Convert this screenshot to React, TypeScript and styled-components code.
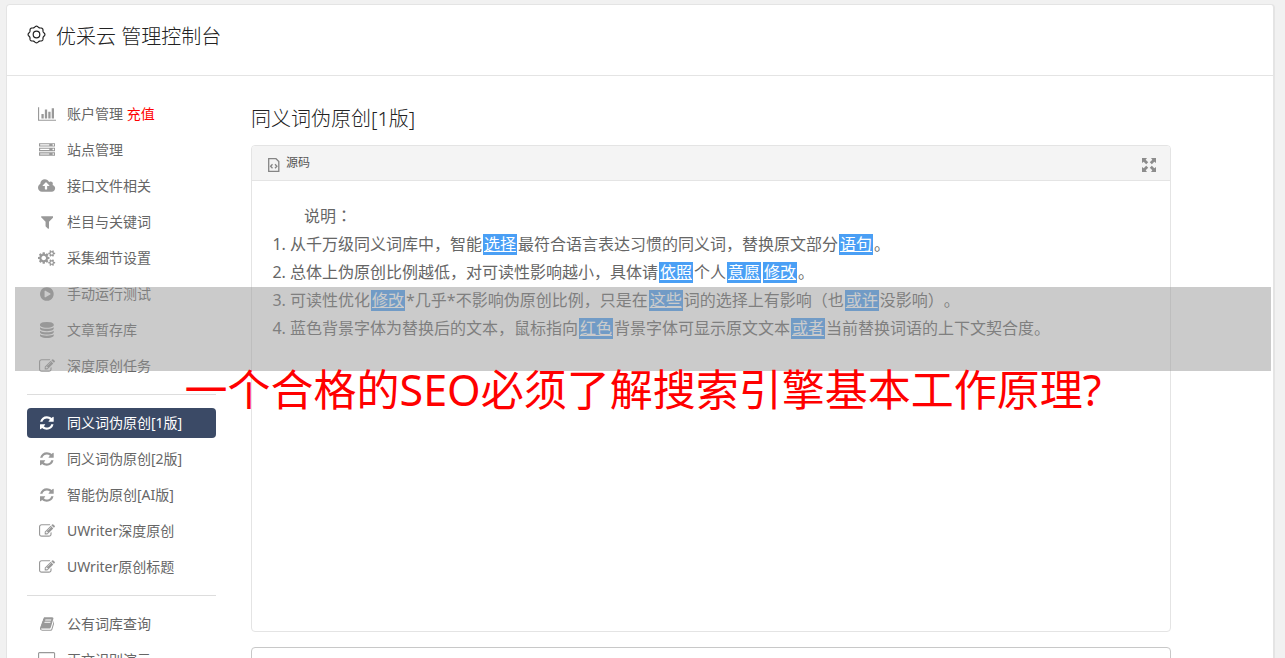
import React from 'react';
import styled, { createGlobalStyle, css } from 'styled-components';

const GlobalStyle = createGlobalStyle`
  *, *::before, *::after { box-sizing: border-box; }
  body {
    margin: 0;
    background: #f1f1f1;
    color: #666;
    font-family: "Noto Sans", "Noto Sans CJK SC", sans-serif;
    font-size: 14px;
    text-spacing-trim: space-all;
  }
  h1, h2, p, ol, ul { margin: 0; padding: 0; font-weight: 400; }
`;

/* ---------- icons ---------- */

type Glyph = { width: number; path: string };

const glyphs = {
  chart: {
    width: 2048,
    path: 'M640 896v512h-256v-512h256zm384-512v1024h-256v-1024h256zm1024 1152v128h-2048v-1536h128v1408h1920zm-640-896v768h-256v-768h256zm384-384v1152h-256v-1152h256z',
  },
  server: {
    width: 1792,
    path: 'M128 1408h1024v-128h-1024v128zm0-512h1024v-128h-1024v128zm1568 448q0-40-28-68t-68-28-68 28-28 68 28 68 68 28 68-28 28-68zm-1568-960h1024v-128h-1024v128zm1568 448q0-40-28-68t-68-28-68 28-28 68 28 68 68 28 68-28 28-68zm0-512q0-40-28-68t-68-28-68 28-28 68 28 68 68 28 68-28 28-68zm96 832v384h-1792v-384h1792zm0-512v384h-1792v-384h1792zm0-512v384h-1792v-384h1792z',
  },
  cloud: {
    width: 1920,
    path: 'M1280 864q0-14-9-23l-352-352q-9-9-23-9t-23 9l-351 351q-10 12-10 24 0 14 9 23t23 9h224v352q0 13 9.5 22.5t22.5 9.5h192q13 0 22.5-9.5t9.5-22.5v-352h224q13 0 22.5-9.5t9.5-22.5zm640 288q0 159-112.5 271.5t-271.5 112.5h-1088q-185 0-316.5-131.5t-131.5-316.5q0-130 70-240t188-165q-2-30-2-43 0-212 150-362t362-150q156 0 285.5 87t188.5 231q71-62 166-62 106 0 181 75t75 181q0 76-41 138 130 31 213.5 135.5t83.5 238.5z',
  },
  filter: {
    width: 1408,
    path: 'M1403 295q17 41-14 70l-493 493v742q0 42-39 59-13 5-25 5-27 0-45-19l-256-256q-19-19-19-45v-486l-493-493q-31-29-14-70 17-39 59-39h1280q42 0 59 39z',
  },
  cogs: {
    width: 1920,
    path: 'M896 896q0-106-75-181t-181-75-181 75-75 181 75 181 181 75 181-75 75-181zm768 512q0-52-38-90t-90-38-90 38-38 90q0 53 37.5 90.5t90.5 37.5 90.5-37.5 37.5-90.5zm0-1024q0-52-38-90t-90-38-90 38-38 90q0 53 37.5 90.5t90.5 37.5 90.5-37.5 37.5-90.5zm-384 421v185q0 10-7 19.5t-16 10.5l-155 24q-11 35-32 76 34 48 90 115 7 10 7 20 0 12-7 19-23 30-82.5 89.5t-78.5 59.5q-11 0-21-7l-115-90q-37 19-77 31-11 108-23 155-7 24-30 24h-186q-11 0-20-7.5t-10-17.5l-23-153q-34-10-75-31l-118 89q-7 7-20 7-11 0-21-8-144-133-144-160 0-9 7-19 10-14 41-53t47-61q-23-44-35-82l-152-24q-10-1-17-9.5t-7-19.5v-185q0-10 7-19.5t16-10.5l155-24q11-35 32-76-34-48-90-115-7-11-7-20 0-12 7-20 22-30 82-89t79-59q11 0 21 7l115 90q34-18 77-32 11-108 23-154 7-24 30-24h186q11 0 20 7.5t10 17.5l23 153q34 10 75 31l118-89q8-7 20-7 11 0 21 8 144 133 144 160 0 9-7 19-12 16-42 54t-45 60q23 48 34 82l152 23q10 2 17 10.5t7 19.5zm640 533v140q0 16-149 31-12 27-30 52 51 113 51 138 0 4-4 7-122 71-124 71-8 0-46-47t-52-68q-20 2-30 2t-30-2q-14 21-52 68t-46 47q-2 0-124-71-4-3-4-7 0-25 51-138-18-25-30-52-149-15-149-31v-140q0-16 149-31 13-29 30-52-51-113-51-138 0-4 4-7 4-2 35-20t59-34 30-16q8 0 46 46.5t52 67.5q20-2 30-2t30 2q51-71 92-112l6-2q4 0 124 70 4 3 4 7 0 25-51 138 17 23 30 52 149 15 149 31zm0-1024v140q0 16-149 31-12 27-30 52 51 113 51 138 0 4-4 7-122 71-124 71-8 0-46-47t-52-68q-20 2-30 2t-30-2q-14 21-52 68t-46 47q-2 0-124-71-4-3-4-7 0-25 51-138-18-25-30-52-149-15-149-31v-140q0-16 149-31 13-29 30-52-51-113-51-138 0-4 4-7 4-2 35-20t59-34 30-16q8 0 46 46.5t52 67.5q20-2 30-2t30 2q51-71 92-112l6-2q4 0 124 70 4 3 4 7 0 25-51 138 17 23 30 52 149 15 149 31z',
  },
  play: {
    width: 1536,
    path: 'M768 128q209 0 385.5 103t279.5 279.5 103 385.5-103 385.5-279.5 279.5-385.5 103-385.5-103-279.5-279.5-103-385.5 103-385.5 279.5-279.5 385.5-103zm384 823q32-18 32-55t-32-55l-544-320q-31-19-64-1-32 19-32 56v640q0 37 32 56 16 8 32 8 17 0 32-9z',
  },
  database: {
    width: 1536,
    path: 'M768 768q237 0 443-43t325-127v170q0 69-103 128t-280 93.5-385 34.5-385-34.5-280-93.5-103-128v-170q119 84 325 127t443 43zm0 768q237 0 443-43t325-127v170q0 69-103 128t-280 93.5-385 34.5-385-34.5-280-93.5-103-128v-170q119 84 325 127t443 43zm0-384q237 0 443-43t325-127v170q0 69-103 128t-280 93.5-385 34.5-385-34.5-280-93.5-103-128v-170q119 84 325 127t443 43zm0-1152q208 0 385 34.5t280 93.5 103 128v128q0 69-103 128t-280 93.5-385 34.5-385-34.5-280-93.5-103-128v-128q0-69 103-128t280-93.5 385-34.5z',
  },
  edit: {
    width: 1792,
    path: 'M888 1184l116-116-152-152-116 116v56h96v96h56zm440-720q-16-16-33 1l-350 350q-17 17-1 33t33-1l350-350q17-17 1-33zm80 594v190q0 119-84.5 203.5t-203.5 84.5h-832q-119 0-203.5-84.5t-84.5-203.5v-832q0-119 84.5-203.5t203.5-84.5h832q63 0 117 25 15 7 18 23 3 17-9 29l-49 49q-14 14-32 8-23-6-45-6h-832q-66 0-113 47t-47 113v832q0 66 47 113t113 47h832q66 0 113-47t47-113v-126q0-13 9-22l64-64q15-15 35-7t20 29zm-96-738l288 288-672 672h-288v-288zm444 132l-92 92-288-288 92-92q28-28 68-28t68 28l152 152q28 28 28 68t-28 68z',
  },
  refresh: {
    width: 1536,
    path: 'M1511 1056q0 5-1 7-64 268-268 434.5t-478 166.5q-146 0-282.5-55t-243.5-157l-129 129q-19 19-45 19t-45-19-19-45v-448q0-26 19-45t45-19h448q26 0 45 19t19 45-19 45l-137 137q71 66 161 102t187 36q134 0 250-65t186-179q11-17 53-117 8-23 30-23h192q13 0 22.5 9.5t9.5 22.5zm25-800v448q0 26-19 45t-45 19h-448q-26 0-45-19t-19-45 19-45l138-138q-148-137-349-137-134 0-250 65t-186 179q-11 17-53 117-8 23-30 23h-199q-13 0-22.5-9.5t-9.5-22.5v-7q65-268 270-434.5t480-166.5q146 0 284 55.5t245 156.5l130-129q19-19 45-19t45 19 19 45z',
  },
  book: {
    width: 1664,
    path: 'M1639 478q40 57 18 129l-275 906q-19 64-76.5 107.5t-122.5 43.5h-923q-77 0-148.5-53.5t-99.5-131.5q-24-67-2-127 0-4 3-27t4-37q1-8-3-21.5t-3-19.5q2-11 8-21t16.5-23.5 16.5-23.5q23-38 45-91.5t30-91.5q3-10 .5-30t-.5-28q3-11 17-28t17-23q21-36 42-92t25-90q1-9-2.5-32t.5-28q4-13 22-30.5t22-22.5q19-26 42.5-84.5t27.5-96.5q1-8-3-25.5t-2-26.5q2-8 9-18t18-23 17-21q8-12 16.5-30.5t15-35 16-36 19.5-32 26.5-23.5 36-11.5 47.5 5.5l-1 3q38-9 51-9h761q74 0 114 56t18 130l-274 906q-36 119-71.5 153.5t-128.5 34.5h-869q-27 0-38 15-11 16-1 43 24 70 144 70h923q29 0 56-15.5t35-41.5l300-987q7-22 5-57 38 15 59 43zm-1064 2q-4 13 2 22.5t20 9.5h608q13 0 25.5-9.5t16.5-22.5l21-64q4-13-2-22.5t-20-9.5h-608q-13 0-25.5 9.5t-16.5 22.5zm-83 256q-4 13 2 22.5t20 9.5h608q13 0 25.5-9.5t16.5-22.5l21-64q4-13-2-22.5t-20-9.5h-608q-13 0-25.5 9.5t-16.5 22.5z',
  },
  desktop: {
    width: 1920,
    path: 'M1792 992v-832q0-13-9.5-22.5t-22.5-9.5h-1600q-13 0-22.5 9.5t-9.5 22.5v832q0 13 9.5 22.5t22.5 9.5h1600q13 0 22.5-9.5t9.5-22.5zm128-832v1088q0 66-47 113t-113 47h-544q0 37 16 77.5t32 71 16 43.5q0 26-19 45t-45 19h-512q-26 0-45-19t-19-45q0-14 16-44t32-70 16-78h-544q-66 0-113-47t-47-113v-1088q0-66 47-113t113-47h1600q66 0 113 47t47 113z',
  },
} satisfies Record<string, Glyph>;

type IconName = keyof typeof glyphs;

const Icon = ({ name }: { name: IconName }) => (
  <svg
    width={(glyphs[name].width * 16) / 1792}
    height="16"
    viewBox={`0 0 ${glyphs[name].width} 1792`}
    fill="currentColor"
    aria-hidden="true"
  >
    <path d={glyphs[name].path} />
  </svg>
);

/* Scalloped outline of the header gear: a circle whose radius swells eight times. */
const gearOutline =
  Array.from({ length: 96 }, (_, i) => {
    const a = (i / 96) * Math.PI * 2;
    const r = 7.8 + 0.6 * Math.cos(a * 8);
    return `${i ? 'L' : 'M'}${(9.5 + r * Math.sin(a)).toFixed(2)} ${(9.5 - r * Math.cos(a)).toFixed(2)}`;
  }).join('') + 'Z';

const GearIcon = () => (
  <svg width="19" height="19" viewBox="0 0 19 19" fill="none" stroke="currentColor" aria-hidden="true">
    <path d={gearOutline} strokeWidth="1.2" />
    <circle cx="9.5" cy="9.5" r="3.3" strokeWidth="1.2" />
  </svg>
);

const SourceIcon = () => (
  <svg width="12" height="14" viewBox="0 0 12 14" fill="none" stroke="#858585" aria-hidden="true">
    <path d="M.7 .7H8L10.8 3.5V13.3H.7Z" strokeWidth="1.3" />
    <path d="M4.5 6.2L2.6 8.2L4.5 10.2M7 6.2L8.9 8.2L7 10.2" strokeWidth="1.3" />
  </svg>
);

const ExpandIcon = () => (
  <svg width="14" height="14" viewBox="0 0 14 14" fill="#8c8c8c" aria-hidden="true">
    {[0, 90, 180, 270].map((turn) => (
      <path key={turn} transform={`rotate(${turn} 7 7)`} d="M0 0H5L3.7 1.7L6.2 4.2L4.2 6.2L1.7 3.7L0 5Z" />
    ))}
  </svg>
);

/* ---------- layout ---------- */

const Page = styled.div`
  position: relative;
  height: 100vh;
  overflow: hidden;
  padding: 4px 10px 0 6px;
`;

const Sheet = styled.div`
  min-height: 100%;
  background: #fff;
  border: 1px solid #e4e4e4;
  border-right-width: 2px;
  border-radius: 4px;
`;

const TopBar = styled.header`
  display: flex;
  align-items: flex-start;
  gap: 10px;
  height: 71px;
  padding: 20px;
  border-bottom: 1px solid #e4e4e4;
  color: #222;
`;

const TopTitle = styled.h1`
  font-size: 20px;
  font-weight: 300;
  line-height: 24px;
`;

const Columns = styled.div`
  display: flex;
  gap: 35px;
  padding: 23px 20px 0;
`;

const Sidebar = styled.nav`
  flex: 0 0 189px;
`;

const MenuGroup = styled.ul`
  display: flex;
  flex-direction: column;
  gap: 6px;
  list-style: none;

  & + & {
    margin-top: 13px;
    padding-top: 13px;
    border-top: 1px solid #ddd;
  }
`;

const MenuLink = styled.a<{ $active?: boolean }>`
  display: flex;
  align-items: center;
  height: 30px;
  border-radius: 4px;
  color: #666;
  text-decoration: none;
  white-space: pre;

  ${({ $active }) =>
    $active &&
    css`
      background: #3b4a66;
      color: #fff;
    `}
`;

const MenuIcon = styled.span<{ $active?: boolean }>`
  display: flex;
  justify-content: center;
  width: 40px;
  color: ${({ $active }) => ($active ? '#fff' : '#999')};
`;

const MenuLabel = styled.span`
  padding-bottom: 2px;
`;

const Recharge = styled.span`
  color: #f00;
`;

const Main = styled.main`
  flex: 0 1 920px;
  min-width: 0;
`;

const Title = styled.h2`
  padding: 6px 0 12px;
  color: #222;
  font-size: 20px;
  font-weight: 300;
  line-height: 28px;
`;

const Editor = styled.section`
  border: 1px solid #e4e4e4;
  border-radius: 4px;
`;

const EditorBar = styled.div`
  display: flex;
  align-items: center;
  justify-content: space-between;
  height: 35px;
  padding: 0 14px 0 16px;
  border-bottom: 1px solid #e4e4e4;
  border-radius: 3px 3px 0 0;
  background: #f4f4f4;
`;

const ToolButton = styled.button`
  display: flex;
  align-items: center;
  gap: 6px;
  padding: 0;
  border: 0;
  background: none;
  color: #555;
  font-family: inherit;
  font-size: 12px;
  line-height: 20px;

  svg { margin-top: 3px; }
`;

const EditorBody = styled.div`
  min-height: 450px;
  padding: 20px;
  font-size: 16px;
  line-height: 28px;
`;

const Intro = styled.p`
  text-indent: 32px;
`;

/* The Traditional face centres full-width punctuation in its cell. */
const Centred = styled.span`
  font-family: "Noto Sans CJK TC", sans-serif;
`;

const Notes = styled.ol`
  padding-left: 18px;
`;

const Swap = styled.a`
  display: inline-block;
  margin: 0 1px;
  padding: 0 1px;
  background: #4a9ff5;
  color: #fff;
  line-height: 21px;
`;

const Output = styled.textarea`
  display: block;
  width: 100%;
  height: 200px;
  margin-top: 15px;
  border: 1px solid #c8c8c8;
  border-radius: 4px;
  background: #fff;
  resize: none;
`;

const Banner = styled.div`
  position: absolute;
  top: 287px;
  right: 14px;
  left: 15px;
  pointer-events: none;
`;

const BannerStrip = styled.div`
  height: 84px;
  background: rgba(151, 151, 151, 0.5);
`;

const BannerText = styled.p`
  color: #f00;
  font-size: 43px;
  line-height: 38px;
  text-align: center;
  white-space: nowrap;
`;

/* ---------- content ---------- */

type Entry = { icon: IconName; label: string; recharge?: boolean; active?: boolean };

const menu: Entry[][] = [
  [
    { icon: 'chart', label: '账户管理', recharge: true },
    { icon: 'server', label: '站点管理' },
    { icon: 'cloud', label: '接口文件相关' },
    { icon: 'filter', label: '栏目与关键词' },
    { icon: 'cogs', label: '采集细节设置' },
    { icon: 'play', label: '手动运行测试' },
    { icon: 'database', label: '文章暂存库' },
    { icon: 'edit', label: '深度原创任务' },
  ],
  [
    { icon: 'refresh', label: '同义词伪原创[1版]', active: true },
    { icon: 'refresh', label: '同义词伪原创[2版]' },
    { icon: 'refresh', label: '智能伪原创[AI版]' },
    { icon: 'edit', label: 'UWriter深度原创' },
    { icon: 'edit', label: 'UWriter原创标题' },
  ],
  [
    { icon: 'book', label: '公有词库查询' },
    { icon: 'desktop', label: '正文识别演示' },
  ],
];

export default function App() {
  return (
    <Page lang="zh-CN">
      <GlobalStyle />
      <Sheet>
        <TopBar>
          <GearIcon />
          <TopTitle>优采云 管理控制台</TopTitle>
        </TopBar>
        <Columns>
          <Sidebar>
            {menu.map((group, g) => (
              <MenuGroup key={g}>
                {group.map((entry) => (
                  <li key={entry.label}>
                    <MenuLink href="#" $active={entry.active}>
                      <MenuIcon $active={entry.active}>
                        <Icon name={entry.icon} />
                      </MenuIcon>
                      <MenuLabel>
                        {entry.label}
                        {entry.recharge && <Recharge> 充值</Recharge>}
                      </MenuLabel>
                    </MenuLink>
                  </li>
                ))}
              </MenuGroup>
            ))}
          </Sidebar>
          <Main>
            <Title>同义词伪原创[1版]</Title>
            <Editor>
              <EditorBar>
                <ToolButton type="button">
                  <SourceIcon />
                  源码
                </ToolButton>
                <ToolButton type="button" aria-label="全屏">
                  <ExpandIcon />
                </ToolButton>
              </EditorBar>
              <EditorBody>
                <Intro>
                  说明<Centred lang="zh-TW">：</Centred>
                </Intro>
                <Notes>
                  <li>
                    从千万级同义词库中，智能<Swap href="#">选择</Swap>最符合语言表达习惯的同义词，替换原文部分<Swap href="#">语句</Swap>。
                  </li>
                  <li>
                    总体上伪原创比例越低，对可读性影响越小，具体请<Swap href="#">依照</Swap>个人<Swap href="#">意愿</Swap><Swap href="#">修改</Swap>。
                  </li>
                  <li>
                    可读性优化<Swap href="#">修改</Swap>*几乎*不影响伪原创比例，只是在<Swap href="#">这些</Swap>词的选择上有影响（也<Swap href="#">或许</Swap>没影响）。
                  </li>
                  <li>
                    蓝色背景字体为替换后的文本，鼠标指向<Swap href="#">红色</Swap>背景字体可显示原文文本<Swap href="#">或者</Swap>当前替换词语的上下文契合度。
                  </li>
                </Notes>
              </EditorBody>
            </Editor>
            <Output aria-label="结果" />
          </Main>
        </Columns>
      </Sheet>
      <Banner>
        <BannerStrip />
        <BannerText>一个合格的SEO必须了解搜索引擎基本工作原理?</BannerText>
      </Banner>
    </Page>
  );
}
